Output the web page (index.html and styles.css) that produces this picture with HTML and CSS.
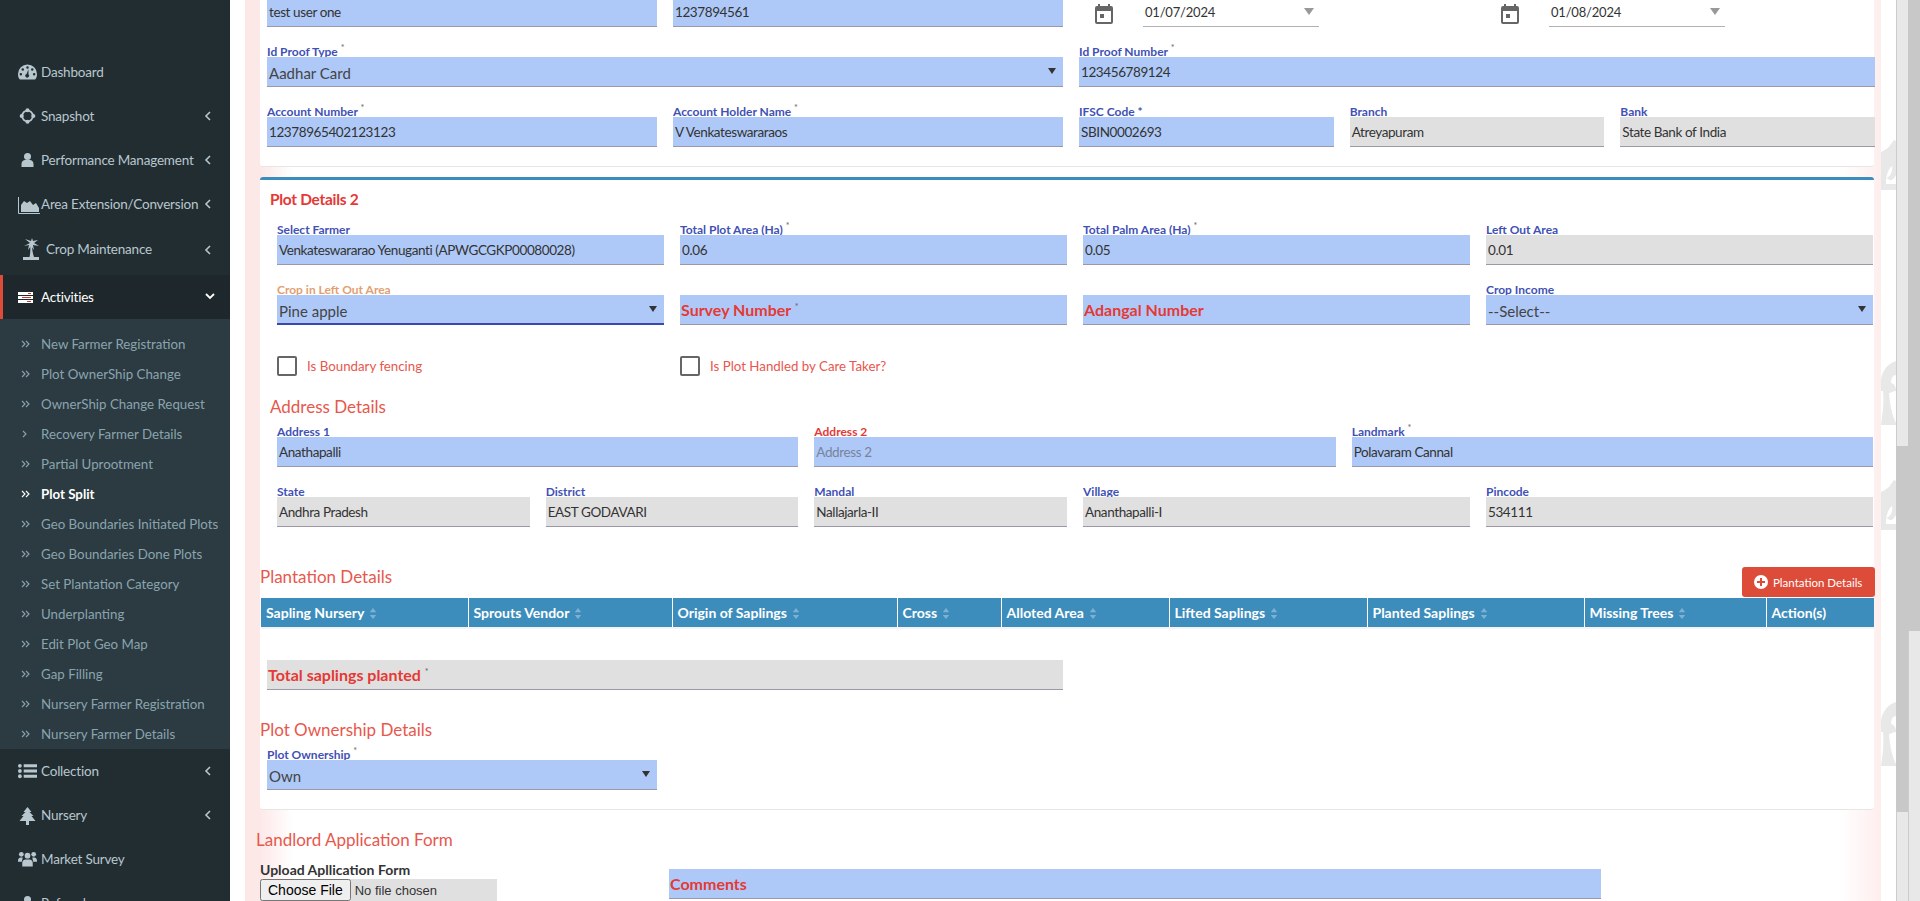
FILE: index.html
```html
<!DOCTYPE html>
<html lang="en">
<head>
    <meta charset="UTF-8">
    <meta name="viewport" content="width=device-width, initial-scale=1.0">
    <title>Plot Split</title>
    <link rel="stylesheet" href="styles.css">
</head>
<body>
    <svg class="icon-defs" aria-hidden="true">
        <symbol id="i-left" viewBox="0 0 8 12"><path d="M6 2 2 6l4 4" fill="none" stroke="currentColor" stroke-width="1.6"/></symbol>
        <symbol id="i-down" viewBox="0 0 12 8"><path d="M2 2l4 4 4-4" fill="none" stroke="currentColor" stroke-width="1.8"/></symbol>
        <symbol id="i-double" viewBox="0 0 9 8"><path d="M1 1l3 3-3 3M5 1l3 3-3 3" fill="none" stroke="currentColor" stroke-width="1.1"/></symbol>
        <symbol id="i-single" viewBox="0 0 9 8"><path d="M2 1l3 3-3 3" fill="none" stroke="currentColor" stroke-width="1.1"/></symbol>
        <symbol id="i-sort" viewBox="0 0 8 12"><path d="M4 0l3.500 4.500h-7zM4 12 .5 7.500h7z" fill="currentColor"/></symbol>
        <symbol id="i-calendar" viewBox="0 0 18 20"><path fill-rule="evenodd" d="M3 0h2v2h8V0h2v2h1a2 2 0 0 1 2 2v14a2 2 0 0 1-2 2H2a2 2 0 0 1-2-2V4a2 2 0 0 1 2-2h1zM2 7v11h14V7zm3 3h4v4H5z" fill="currentColor"/></symbol>
        <symbol id="i-palm" viewBox="0 0 15 64"><path d="M0 64C2 50 3 42 2 30L0 30V18C2 8 8 2 15 0V14C12 14 10 17 10 22 12 22 14 24 15 28V30C12 30 10 32 8 32 9 44 11 54 15 62V64Z" fill="currentColor"/></symbol>
        <symbol id="i-palmtop" viewBox="0 0 15 50"><path d="M0 12C4 10 8 8 10 4L13 0 15 1V35C12 40 10 42 6 38 10 36 12 30 11 26 8 28 5 34 5 44H15V50H0Z" fill="currentColor"/></symbol>
    </svg>

    <aside class="sidebar">
        <ul class="menu">
            <li class="menu-item">
                <svg class="menu-icon" viewBox="0 0 20 16"><path fill-rule="evenodd" d="M10 0a10 10 0 0 1 10 10c0 2.400-.7 4.400-2 6H2C.7 14.400 0 12.400 0 10A10 10 0 0 1 10 0zM10 2a1.300 1.300 0 1 0 0 2.600A1.300 1.300 0 0 0 10 2zM5 4a1.300 1.300 0 1 0 0 2.600A1.300 1.300 0 0 0 5 4zM15 4a1.300 1.300 0 1 0 0 2.600A1.300 1.300 0 0 0 15 4zM3 9a1.300 1.300 0 1 0 0 2.600A1.300 1.300 0 0 0 3 9zM17 9a1.300 1.300 0 1 0 0 2.600A1.300 1.300 0 0 0 17 9zM11 5 9 10a2 2 0 1 0 2 .3z" fill="currentColor"/></svg>
                <span>Dashboard</span>
            </li>
            <li class="menu-item">
                <svg class="menu-icon" viewBox="0 0 18 18"><circle cx="9" cy="9" r="6" fill="none" stroke="currentColor" stroke-width="2"/><circle cx="9" cy="2.500" r="2.300" fill="currentColor"/><circle cx="9" cy="15.500" r="2.300" fill="currentColor"/><circle cx="2.500" cy="9" r="2.300" fill="currentColor"/><circle cx="15.500" cy="9" r="2.300" fill="currentColor"/></svg>
                <span>Snapshot</span>
                <svg class="chevron"><use href="#i-left"/></svg>
            </li>
            <li class="menu-item">
                <svg class="menu-icon menu-icon-small" viewBox="0 0 12 14"><circle cx="6" cy="3.500" r="3.500" fill="currentColor"/><path d="M0 14v-3c0-2.500 2-4 3.500-4h5C10 7 12 8.500 12 11v3z" fill="currentColor"/></svg>
                <span>Performance Management</span>
                <svg class="chevron"><use href="#i-left"/></svg>
            </li>
            <li class="menu-item">
                <svg class="menu-icon menu-icon-wide" viewBox="0 0 22 17"><path d="M.5 0v16.500H22" fill="none" stroke="currentColor"/><path d="M3 15V8l3-4 3 2 3-2 3 4 3-2 3 5v4z" fill="currentColor"/></svg>
                <span>Area Extension/Conversion</span>
                <svg class="chevron"><use href="#i-left"/></svg>
            </li>
            <li class="menu-item menu-item-crop">
                <svg class="menu-icon menu-icon-palm" viewBox="0 0 16 22"><path d="M7 5 2 1l6 2L9 0l1 3 5-1-4 3 5 3-6-1 1 5-3-4-3 4 1-5-5 1z" fill="currentColor"/><path d="M7 7h2c0 5 1 9 2 12H6.500c1-4 1-8 .5-12z" fill="currentColor"/><path d="M0 19h16v3H0z" fill="currentColor"/></svg>
                <span>Crop Maintenance</span>
                <svg class="chevron"><use href="#i-left"/></svg>
            </li>
            <li class="menu-item menu-item-open">
                <svg class="menu-icon menu-icon-tasks" viewBox="0 0 15 11"><path d="M0 0h15v3H0zM0 4h15v3H0zM0 8h15v3H0z" fill="#fff"/><path d="M10 1h3v1h-3zM4 5h9v1H4zM9 9h4v1H9z" fill="#c23b30"/></svg>
                <span>Activities</span>
                <svg class="chevron-down"><use href="#i-down"/></svg>
            </li>
            <li>
                <ul class="submenu">
                    <li><svg><use href="#i-double"/></svg>New Farmer Registration</li>
                    <li><svg><use href="#i-double"/></svg>Plot OwnerShip Change</li>
                    <li><svg><use href="#i-double"/></svg>OwnerShip Change Request</li>
                    <li><svg><use href="#i-single"/></svg>Recovery Farmer Details</li>
                    <li><svg><use href="#i-double"/></svg>Partial Uprootment</li>
                    <li class="active"><svg><use href="#i-double"/></svg>Plot Split</li>
                    <li><svg><use href="#i-double"/></svg>Geo Boundaries Initiated Plots</li>
                    <li><svg><use href="#i-double"/></svg>Geo Boundaries Done Plots</li>
                    <li><svg><use href="#i-double"/></svg>Set Plantation Category</li>
                    <li><svg><use href="#i-double"/></svg>Underplanting</li>
                    <li><svg><use href="#i-double"/></svg>Edit Plot Geo Map</li>
                    <li><svg><use href="#i-double"/></svg>Gap Filling</li>
                    <li><svg><use href="#i-double"/></svg>Nursery Farmer Registration</li>
                    <li><svg><use href="#i-double"/></svg>Nursery Farmer Details</li>
                </ul>
            </li>
            <li class="menu-item">
                <svg class="menu-icon" viewBox="0 0 20 16"><path d="M6 1h14v3H6zM6 6.500h14v3H6zM6 12h14v3H6z" fill="currentColor"/><circle cx="2" cy="2.500" r="2" fill="currentColor"/><circle cx="2" cy="8" r="2" fill="currentColor"/><circle cx="2" cy="13.500" r="2" fill="currentColor"/></svg>
                <span>Collection</span>
                <svg class="chevron"><use href="#i-left"/></svg>
            </li>
            <li class="menu-item">
                <svg class="menu-icon menu-icon-tree" viewBox="0 0 16 18"><path d="M8 0l4 5h-2l4 4h-2l4 5H9.500v4h-3v-4H0l4-5H2l4-4H4z" fill="currentColor"/></svg>
                <span>Nursery</span>
                <svg class="chevron"><use href="#i-left"/></svg>
            </li>
            <li class="menu-item">
                <svg class="menu-icon" viewBox="0 0 20 16"><circle cx="3.500" cy="3" r="2.500" fill="currentColor"/><circle cx="16.500" cy="3" r="2.500" fill="currentColor"/><circle cx="10" cy="4.500" r="3" fill="currentColor"/><path d="M0 10c0-2 1-3.500 3-3.500h2L4 11H0zM20 10c0-2-1-3.500-3-3.500h-2l1 4.500h4zM4.500 16v-4c0-2 1.500-3.500 3.500-3.500h4c2 0 3.500 1.500 3.500 3.500v4z" fill="currentColor"/></svg>
                <span>Market Survey</span>
            </li>
            <li class="menu-item">
                <svg class="menu-icon menu-icon-small" viewBox="0 0 12 14"><circle cx="6" cy="3.500" r="3.500" fill="currentColor"/><path d="M0 14v-3c0-2.500 2-4 3.500-4h5C10 7 12 8.500 12 11v3z" fill="currentColor"/></svg>
                <span>Referrals</span>
            </li>
        </ul>
    </aside>

    <main class="content">
        <section class="card card-farmer">
            <div class="form-grid">
                <div class="field span-3"><label></label><div class="box">test user one</div></div>
                <div class="field span-3"><label></label><div class="box">1237894561</div></div>
                <div class="date-field span-3">
                    <svg class="calendar"><use href="#i-calendar"/></svg>
                    <div class="date-box">01/07/2024<i class="date-arrow"></i></div>
                </div>
                <div class="date-field span-3">
                    <svg class="calendar"><use href="#i-calendar"/></svg>
                    <div class="date-box">01/08/2024<i class="date-arrow"></i></div>
                </div>

                <div class="field span-6"><label>Id Proof Type <sup>*</sup></label><div class="box select">Aadhar Card</div></div>
                <div class="field span-6"><label>Id Proof Number <sup>*</sup></label><div class="box">123456789124</div></div>

                <div class="field span-3"><label>Account Number <sup>*</sup></label><div class="box">12378965402123123</div></div>
                <div class="field span-3"><label>Account Holder Name <sup>*</sup></label><div class="box">V Venkateswararaos</div></div>
                <div class="field span-2"><label>IFSC Code *</label><div class="box">SBIN0002693</div></div>
                <div class="field span-2"><label>Branch</label><div class="box readonly">Atreyapuram</div></div>
                <div class="field span-2"><label>Bank</label><div class="box readonly">State Bank of India</div></div>
            </div>
        </section>

        <section class="card card-plot">
            <h3 class="plot-title">Plot Details 2</h3>
            <div class="form-grid plot-grid">
                <div class="field span-3"><label>Select Farmer</label><div class="box">Venkateswararao Yenuganti (APWGCGKP00080028)</div></div>
                <div class="field span-3"><label>Total Plot Area (Ha) <sup>*</sup></label><div class="box">0.06</div></div>
                <div class="field span-3"><label>Total Palm Area (Ha) <sup>*</sup></label><div class="box">0.05</div></div>
                <div class="field span-3"><label>Left Out Area</label><div class="box readonly">0.01</div></div>

                <div class="field span-3"><label class="label-focus">Crop in Left Out Area</label><div class="box select focused">Pine apple</div></div>
                <div class="field span-3"><label></label><div class="box empty-label">Survey Number <sup>*</sup></div></div>
                <div class="field span-3"><label></label><div class="box empty-label">Adangal Number</div></div>
                <div class="field span-3"><label>Crop Income</label><div class="box select">--Select--</div></div>
            </div>

            <div class="form-grid plot-grid checks">
                <div class="check span-3"><i class="checkbox"></i>Is Boundary fencing</div>
                <div class="check span-3"><i class="checkbox"></i>Is Plot Handled by Care Taker?</div>
            </div>

            <h4 class="sub-title address-title">Address Details</h4>
            <div class="form-grid plot-grid">
                <div class="field span-4"><label>Address 1</label><div class="box">Anathapalli</div></div>
                <div class="field span-4"><label class="label-error">Address 2</label><div class="box placeholder">Address 2</div></div>
                <div class="field span-4"><label>Landmark <sup>*</sup></label><div class="box">Polavaram Cannal</div></div>

                <div class="field span-2"><label>State</label><div class="box readonly">Andhra Pradesh</div></div>
                <div class="field span-2"><label>District</label><div class="box readonly">EAST GODAVARI</div></div>
                <div class="field span-2"><label>Mandal</label><div class="box readonly">Nallajarla-II</div></div>
                <div class="field span-3"><label>Village</label><div class="box readonly">Ananthapalli-I</div></div>
                <div class="field span-3"><label>Pincode</label><div class="box readonly">534111</div></div>
            </div>

            <div class="plantation-head">
                <h4 class="sub-title">Plantation Details</h4>
                <button class="add-button" type="button">
                    <svg viewBox="0 0 14 14"><circle cx="7" cy="7" r="7" fill="#fff"/><path d="M6 3h2v3h3v2H8v3H6V8H3V6h3z" fill="#dd4b39"/></svg>
                    Plantation Details
                </button>
            </div>
            <table class="plantation-table">
                <thead>
                    <tr>
                        <th>Sapling Nursery<svg><use href="#i-sort"/></svg></th>
                        <th>Sprouts Vendor<svg><use href="#i-sort"/></svg></th>
                        <th>Origin of Saplings<svg><use href="#i-sort"/></svg></th>
                        <th>Cross<svg><use href="#i-sort"/></svg></th>
                        <th>Alloted Area<svg><use href="#i-sort"/></svg></th>
                        <th>Lifted Saplings<svg><use href="#i-sort"/></svg></th>
                        <th>Planted Saplings<svg><use href="#i-sort"/></svg></th>
                        <th>Missing Trees<svg><use href="#i-sort"/></svg></th>
                        <th>Action(s)</th>
                    </tr>
                </thead>
            </table>

            <div class="box readonly empty-label total-box">Total saplings planted <sup>*</sup></div>

            <h4 class="sub-title ownership-title">Plot Ownership Details</h4>
            <div class="field ownership-field"><label>Plot Ownership <sup>*</sup></label><div class="box select">Own</div></div>
        </section>

        <h4 class="sub-title landlord-title">Landlord Application Form</h4>
        <div class="landlord-row">
            <div class="upload">
                <label>Upload Apllication Form</label>
                <input class="file-input" type="file">
            </div>
            <div class="box empty-label comments">Comments</div>
        </div>
    </main>

    <div class="gutter">
        <svg class="palm palm-1"><use href="#i-palmtop"/></svg>
        <svg class="palm palm-2"><use href="#i-palm"/></svg>
        <svg class="palm palm-3"><use href="#i-palmtop"/></svg>
        <svg class="palm palm-4"><use href="#i-palm"/></svg>
    </div>

    <div class="scrollbar scrollbar-inner"><div class="thumb"></div></div>
    <div class="scrollbar scrollbar-outer"><div class="thumb"></div></div>
</body>
</html>
```

FILE: styles.css
```css
* {
    box-sizing: border-box;
}

html, body {
    height: 901px;
    margin: 0;
    overflow: hidden;
}

body {
    display: flex;
    font-family: Lato, "Noto Sans", sans-serif;
    font-size: 13px;
    color: #333;
    background-color: #fff;
}

.icon-defs {
    display: none;
}

/* Sidebar */
.sidebar {
    flex: 0 0 230px;
    height: 901px;
    padding-top: 50px;
    overflow: hidden;
    background-color: #222d32;
    color: #b8c7ce;
}

.menu, .submenu {
    list-style: none;
    margin: 0;
    padding: 0;
}

.menu-item {
    position: relative;
    display: flex;
    align-items: center;
    height: 44px;
    padding-left: 18px;
    font-size: 13.500px;
    letter-spacing: -0.2px;
}

.menu-item span {
    margin-left: 4px;
    white-space: nowrap;
}

.menu-icon {
    flex: 0 0 19px;
    width: 19px;
    height: 16px;
}

.menu-icon-small {
    height: 14px;
    flex-basis: 19px;
}

.menu-icon-wide {
    flex-basis: 22px;
    width: 22px;
    height: 17px;
    margin-right: -3px;
    margin-top: 2px;
}

.menu-icon-palm {
    flex-basis: 16px;
    height: 22px;
    margin-left: 5px;
    margin-right: 3px;
}

.menu-icon-tasks {
    flex-basis: 15px;
    height: 11px;
    margin-right: 4px;
}

.menu-icon-tree {
    height: 18px;
    margin-top: 2px;
}

.menu-item-crop {
    height: 49px;
    padding-bottom: 4px;
}

.menu-item-crop .chevron {
    top: 18px;
}

.menu-item-open {
    height: 44px;
    padding-left: 15px;
    border-left: 3px solid #dd4b39;
    background-color: #1e282c;
    color: #fff;
}

.chevron {
    position: absolute;
    left: 204px;
    top: 16px;
    width: 8px;
    height: 12px;
}

.chevron-down {
    position: absolute;
    left: 201px;
    top: 17px;
    width: 12px;
    height: 8px;
}

.submenu {
    padding: 10px 0 0 1px;
    height: 430px;
    background-color: #2c3b41;
    font-size: 13.300px;
    color: #8aa4af;
}

.submenu li {
    display: flex;
    align-items: center;
    height: 30px;
    padding-left: 20px;
    white-space: nowrap;
}

.submenu svg {
    flex: 0 0 9px;
    width: 9px;
    height: 8px;
    margin-right: 11px;
}

.submenu .active {
    color: #fff;
    font-weight: 700;
}

/* Main column */
.content {
    flex: 0 0 1636px;
    height: 901px;
    margin-left: 15px;
    padding: 0 7px 0 15px;
    overflow: hidden;
    background: linear-gradient(90deg, #fde8e8 0, #fde8e8 15px, #fff 48px, #fff calc(100% - 42px), #feeeee 100%);
}

.card {
    background-color: #fff;
    border-bottom: 1px solid #e6e6e6;
    border-radius: 3px;
}

.card-farmer {
    height: 180px;
    margin-top: -13px;
    padding-left: 7px;
}

.card-plot {
    height: 633px;
    margin-top: 10px;
    padding-top: 9px;
    border-top: 3px solid #3c8dbc;
}

.form-grid {
    display: grid;
    grid-template-columns: repeat(12, 1fr);
    column-gap: 16px;
    row-gap: 20px;
}

.card-farmer .form-grid {
    margin-right: -1px;
}

.plot-grid {
    margin-left: 17px;
    margin-right: 1px;
}

.span-2 { grid-column: span 2; }
.span-3 { grid-column: span 3; }
.span-4 { grid-column: span 4; }
.span-6 { grid-column: span 6; }

.field label {
    display: block;
    height: 10px;
    font-size: 12px;
    font-weight: 700;
    line-height: 10px;
    color: #3f51b5;
    white-space: nowrap;
}

sup {
    font-size: 9px;
    font-weight: 400;
    line-height: 0;
    color: #666;
}

.field .label-focus {
    color: #e2a06f;
}

.field .label-error {
    color: #e53935;
}

.box {
    position: relative;
    height: 30px;
    padding: 0 2px;
    border-bottom: 1px solid #9c98a8;
    background-color: #aec9f7;
    font-size: 13.500px;
    letter-spacing: -0.4px;
    line-height: 31px;
    color: #333;
    white-space: nowrap;
}

.readonly {
    background-color: #e0e0e0;
}

.select {
    font-size: 15px;
    letter-spacing: 0;
    line-height: 33px;
    color: #444;
}

.select::after {
    content: "";
    position: absolute;
    right: 7px;
    top: 11px;
    border-left: 4.500px solid transparent;
    border-right: 4.500px solid transparent;
    border-top: 6px solid #333;
}

.focused {
    border-bottom: 2px solid #3949ab;
}

.placeholder {
    color: #78849c;
}

.empty-label {
    padding-left: 1px;
    font-size: 16px;
    font-weight: 700;
    letter-spacing: 0;
    line-height: 29px;
    color: #e53935;
}

.date-field {
    display: flex;
    align-items: flex-end;
    height: 40px;
    padding-left: 16px;
}

.calendar {
    flex: 0 0 18px;
    width: 18px;
    height: 20px;
    margin: 0 30px 3px 0;
    color: #666;
}

.date-box {
    position: relative;
    width: 176px;
    height: 30px;
    padding-left: 2px;
    border-bottom: 1px solid #b5aeb2;
    letter-spacing: -0.2px;
    line-height: 31px;
}

.date-arrow {
    position: absolute;
    right: 5px;
    top: 11px;
    border-left: 5.500px solid transparent;
    border-right: 5.500px solid transparent;
    border-top: 7px solid #999;
}

.plot-title {
    height: 20px;
    margin: 0 0 16px 10px;
    font-size: 15.500px;
    font-weight: 700;
    letter-spacing: -0.3px;
    line-height: 20px;
    color: #e53935;
}

.checks {
    margin-top: 31px;
}

.check {
    display: flex;
    align-items: center;
    height: 20px;
    font-size: 13.300px;
    color: #e8574d;
}

.checkbox {
    width: 20px;
    height: 20px;
    margin-right: 10px;
    border: 2px solid #666;
    border-radius: 2px;
}

.sub-title {
    height: 20px;
    margin: 0;
    font-size: 17px;
    font-weight: 400;
    line-height: 20px;
    color: #e8574d;
}

.address-title {
    margin: 21px 0 10px 10px;
}

.plantation-head {
    display: flex;
    align-items: flex-start;
    justify-content: space-between;
    margin-top: 40px;
}

.add-button {
    display: flex;
    align-items: center;
    width: 133px;
    height: 30px;
    margin-right: -1px;
    padding: 0 0 0 12px;
    border: none;
    border-radius: 3px;
    background-color: #dd4b39;
    font-family: inherit;
    font-size: 11.500px;
    color: #fff;
}

.add-button svg {
    width: 14px;
    height: 14px;
    margin-right: 5px;
}

.plantation-table {
    width: 1613px;
    margin: 1px 0 0 1px;
    border-collapse: collapse;
    table-layout: fixed;
    border-bottom: 2px solid #f4f4f4;
}

.plantation-table th {
    height: 30px;
    padding: 0 5px;
    border-right: 1px solid #fff;
    background-color: #3c8dbc;
    font-size: 14px;
    text-align: left;
    color: #fff;
    white-space: nowrap;
}

.plantation-table th:last-child {
    border-right: none;
}

.plantation-table th:nth-child(1) { width: 207px; }
.plantation-table th:nth-child(2) { width: 204px; }
.plantation-table th:nth-child(3) { width: 225px; }
.plantation-table th:nth-child(4) { width: 104px; }
.plantation-table th:nth-child(5) { width: 168px; }
.plantation-table th:nth-child(6) { width: 198px; }
.plantation-table th:nth-child(7) { width: 217px; }
.plantation-table th:nth-child(8) { width: 182px; }

.plantation-table svg {
    width: 8px;
    height: 11px;
    margin-left: 5px;
    vertical-align: -1px;
    color: #7db2d4;
}

.total-box {
    width: 796px;
    margin: 31px 0 0 7px;
}

.ownership-title {
    margin-top: 30px;
}

.ownership-field {
    width: 390px;
    margin: 10px 0 0 7px;
}

.landlord-title {
    margin: 20px 0 0 -4px;
}

.landlord-row {
    display: flex;
    align-items: flex-start;
    margin-top: 13px;
}

.upload {
    flex: 0 0 409px;
}

.upload label {
    display: block;
    height: 14px;
    margin-bottom: 2px;
    font-size: 14px;
    font-weight: 700;
    line-height: 14px;
    color: #333;
}

.file-input {
    display: block;
    width: 237px;
    height: 24px;
    background-color: #e0e0e0;
    font-size: 13px;
    color: #333;
}

.file-input::file-selector-button {
    font-family: "Liberation Sans", sans-serif;
    font-size: 14px;
}

.comments {
    width: 932px;
    margin-top: 6px;
}

/* Right gutter with the page background */
.gutter {
    position: relative;
    flex: 0 0 15px;
    height: 901px;
    overflow: hidden;
    color: #e8e8e8;
}

.palm {
    position: absolute;
    left: 0;
    width: 15px;
}

.palm-1 { top: 140px; height: 50px; }
.palm-2 { top: 361px; height: 64px; }
.palm-3 { top: 480px; height: 50px; }
.palm-4 { top: 702px; height: 64px; }

/* The two page scrollbars */
.scrollbar {
    flex: 0 0 12px;
    height: 901px;
    background-color: #e8e8e8;
}

.scrollbar-inner {
    border-left: 1px solid #ccc;
    padding-top: 446px;
}

.scrollbar-inner .thumb {
    height: 366px;
    margin-left: -1px;
    background-color: #c8c8c8;
}

.scrollbar-outer {
    border-left: 1px solid #ccc;
}

.scrollbar-outer .thumb {
    height: 631px;
    margin-left: -1px;
    background-color: #c8c8c8;
}
```
